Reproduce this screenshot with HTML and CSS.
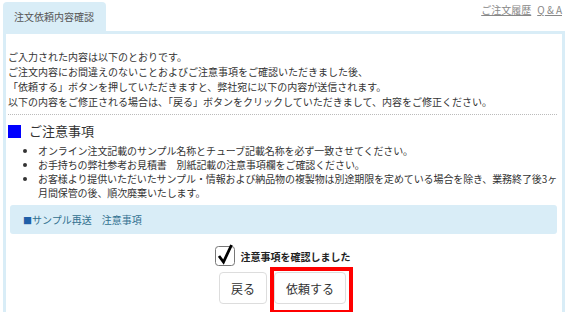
FILE: index.html
```html
<!DOCTYPE html>
<html lang="ja">
  <head>
    <meta charset="UTF-8" />
    <meta name="viewport" content="width=device-width, initial-scale=1.0" />
    <title>注文依頼内容確認</title>

    <link rel="stylesheet" href="styles.css">
  </head>
  <body>
    <div class="top">
      <div class="tab">注文依頼内容確認</div>
      <div class="links">
        <a href="#">ご注文履歴</a>
        <a href="#">Q &amp; A</a>
      </div>
    </div>

    <div class="panel">
      <div class="intro">
        <p>ご入力された内容は以下のとおりです。</p>
        <p>ご注文内容にお間違えのないことおよびご注意事項をご確認いただきました後、</p>
        <p>「依頼する」ボタンを押していただきますと、弊社宛に以下の内容が送信されます。</p>
        <p>以下の内容をご修正される場合は、「戻る」ボタンをクリックしていただきまして、内容をご修正ください。</p>
      </div>

      <h2 class="notice-title"><span class="mark"></span>ご注意事項</h2>
      <ul class="notes">
        <li>オンライン注文記載のサンプル名称とチューブ記載名称を必ず一致させてください。</li>
        <li>お手持ちの弊社参考お見積書　別紙記載の注意事項欄をご確認ください。</li>
        <li>お客様より提供いただいたサンプル・情報および納品物の複製物は別途期限を定めている場合を除き、業務終了後3ヶ月間保管の後、順次廃棄いたします。</li>
      </ul>

      <div class="info"><span class="sq">■</span>サンプル再送　注意事項</div>

      <label class="confirm">
        <span class="box">
          <svg width="21" height="22" viewBox="0 0 21 22">
            <rect x="0.5" y="2.5" width="19" height="19" rx="3" fill="#fff" stroke="#777" />
            <path d="M4 12 L8.5 18 L16.5 1" fill="none" stroke="#000" stroke-width="2.8" />
          </svg>
        </span>
        注意事項を確認しました
      </label>

      <div class="actions">
        <button class="btn">戻る</button>
        <span class="highlight"><button class="btn">依頼する</button></span>
      </div>
    </div>
  </body>
</html>
```

FILE: styles.css
```css
* {
  box-sizing: border-box;
}

body {
  margin: 0;
  background-color: #fff;
  font-family: "Noto Sans CJK JP", "DejaVu Sans", sans-serif;
  font-size: 10px;
  color: #333;
}

p,
ul,
h2 {
  margin: 0;
  padding: 0;
}

.top {
  display: flex;
  justify-content: space-between;
  align-items: flex-start;
  padding: 2px 4px 0 3px;
}
.tab {
  height: 29px;
  line-height: 29px;
  padding: 0 12px 0 11px;
  background-color: #d9edf7;
  border-radius: 4px 4px 0 0;
  color: #555;
}
.links {
  display: flex;
  gap: 6px;
  line-height: 14px;
  margin-top: 1px;
}
.links a {
  color: #888;
  text-decoration: underline;
}

.panel {
  margin: 0 1px 0 3px;
  border: 3px solid #d9edf7;
  border-bottom: none;
  padding: 15px 5px 8px 2px;
}

.intro {
  line-height: 15px;
  padding-bottom: 5px;
  border-bottom: 1px dotted #bbb;
}

.notice-title {
  display: flex;
  align-items: center;
  gap: 8px;
  margin: 8px 0 5px 0;
  font-size: 13px;
  font-weight: normal;
  line-height: 16px;
}
.mark {
  width: 13px;
  height: 13px;
  background-color: #0000ff;
}

.notes {
  list-style: disc;
  padding-left: 30px;
  margin-right: -6px;
  line-height: 14px;
  letter-spacing: -0.1px;
}

.info {
  margin: 5px 0 0 2px;
  height: 29px;
  line-height: 29px;
  padding-left: 13px;
  background-color: #d9edf7;
  border-radius: 3px;
  color: #31708f;
}
.sq {
  color: #1f5fa8;
  font-size: 9px;
}

.confirm {
  display: flex;
  justify-content: center;
  align-items: center;
  gap: 5px;
  margin-top: 13px;
  font-weight: bold;
  color: #222;
}
.box {
  display: flex;
  margin-top: -3px;
}

.actions {
  display: flex;
  justify-content: center;
  align-items: flex-start;
  gap: 7px;
  margin-top: 6px;
}
.btn {
  height: 32px;
  padding: 0 11px;
  font-family: inherit;
  font-size: 12px;
  color: #333;
  background-color: #fff;
  border: 1px solid #ddd;
  border-radius: 4px;
}
.highlight {
  display: flex;
  border: 4px solid #f00;
  padding: 1px 3px 6px 0;
  margin: -5px -7px -10px -4px;
}
```
